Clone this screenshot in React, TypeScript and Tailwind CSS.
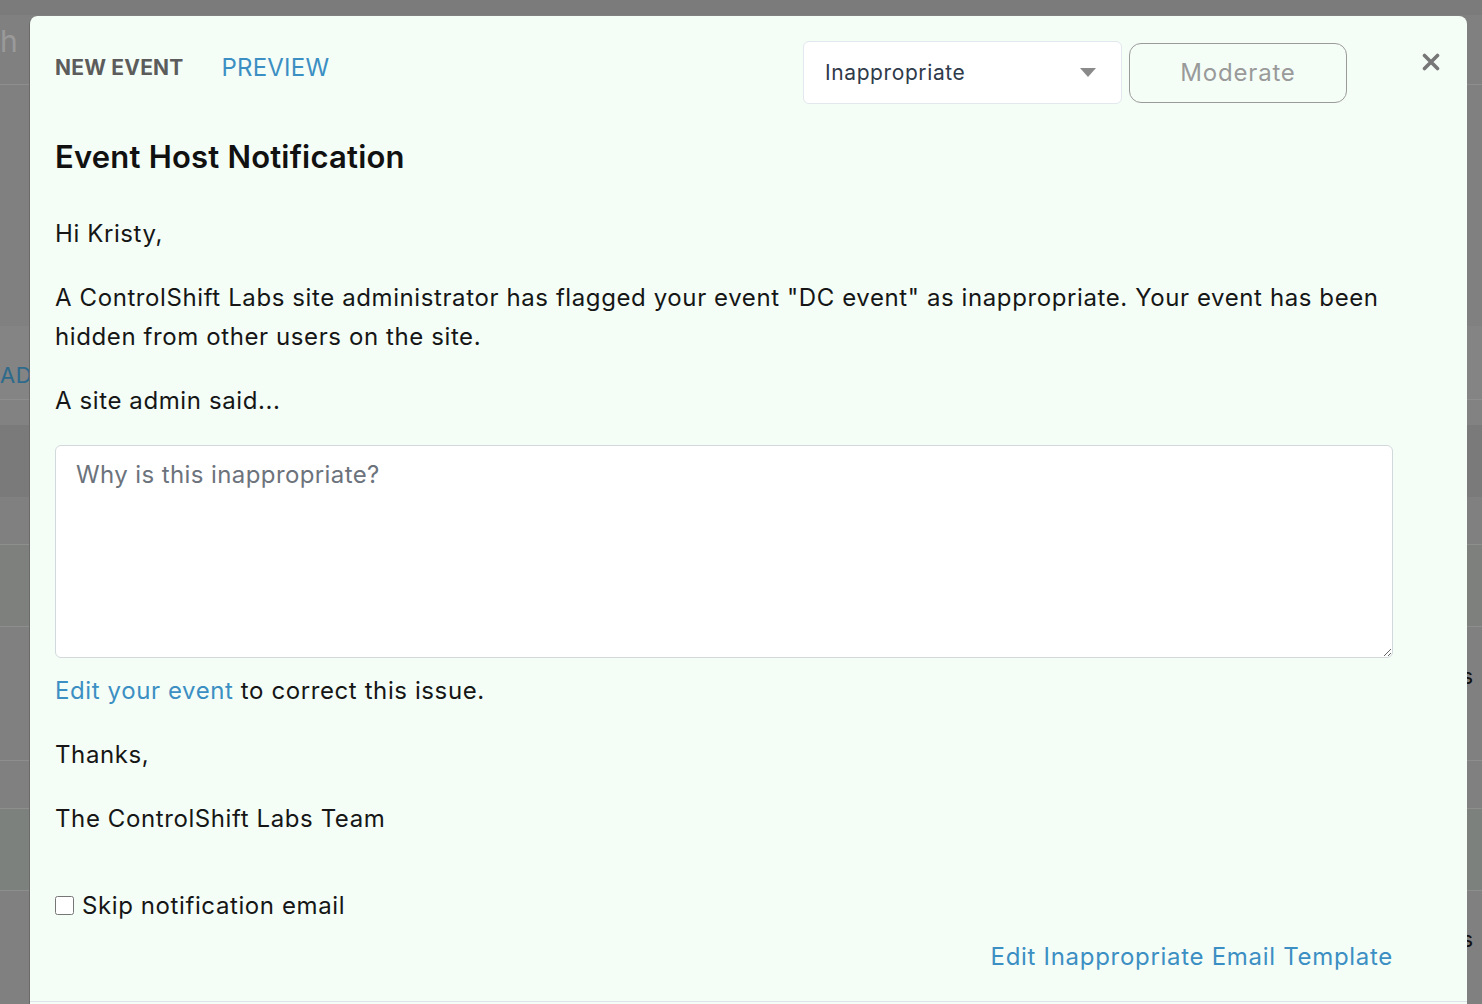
import React from 'react';

const BgRow: React.FC<{ h: string; bg: string; line?: boolean; left?: React.ReactNode; right?: React.ReactNode }> = ({ h, bg, line, left, right }) => (
  <div className={`flex items-center justify-between ${h} ${bg} ${line ? 'border-b border-[#8e8e8e]' : ''}`}>
    <div>{left}</div>
    <div>{right}</div>
  </div>
);

export default function App() {
  return (
    <div className="relative w-[1482px] h-[1004px] overflow-hidden bg-[#808080]" style={{ fontFamily: 'Inter, "Noto Sans", sans-serif' }}>
      {/* page behind the overlay */}
      <div className="flex flex-col">
        <BgRow h="h-[15px]" bg="bg-[#7b7b7b]" />
        <BgRow h="h-[70px]" bg="bg-[#808080]" line left={<span className="relative top-[-8px] text-[30px] text-[#9a9a9a] leading-none">h</span>} />
        <BgRow h="h-[241px]" bg="bg-[#808080]" />
        <BgRow h="h-[74px]" bg="bg-[#848484]" line left={<span className="relative top-[13px] text-[22px] tracking-wide text-[#2d6a8c]">AD</span>} />
        <BgRow h="h-[25px]" bg="bg-[#828282]" />
        <BgRow h="h-[72px]" bg="bg-[#7a7a7a]" />
        <BgRow h="h-[48px]" bg="bg-[#808080]" line />
        <BgRow h="h-[82px]" bg="bg-[#7e807d]" line />
        <BgRow h="h-[134px]" bg="bg-[#808080]" line right={<span className="relative top-[-17px] text-[22px] text-[#111] mr-[9px]">s</span>} />
        <BgRow h="h-[48px]" bg="bg-[#808080]" line />
        <BgRow h="h-[82px]" bg="bg-[#7d817d]" line />
        <BgRow h="h-[111px]" bg="bg-[#808080]" right={<span className="relative top-[-7px] text-[22px] text-[#111] mr-[9px]">s</span>} />
      </div>

      {/* modal */}
      <div className="absolute left-[29px] top-[16px] w-[1438px] h-[1010px] bg-[#f4fef7] rounded-t-[8px] border-l border-[#6a6a6a]">
        <div className="flex flex-col pl-[25px] pr-[74px]">
          {/* header */}
          <div className="flex items-start pt-[25px] -mr-[47px]">
            <div className="flex items-center gap-[38px] mt-[9px]">
              <span className="text-[21px] font-bold text-[#5c5c5c] tracking-[0.2px]">NEW EVENT</span>
              <span className="text-[24px] text-[#3c8fc3] tracking-[0.2px]">PREVIEW</span>
            </div>
            <div className="ml-auto flex items-start gap-[7px]">
              <div className="w-[319px] h-[63px] bg-white border border-[#e3e8ee] rounded-[6px] flex items-center justify-between pl-[21px] pr-[25px]">
                <span className="text-[21px] tracking-[0.6px] text-[#2f3a4a]">Inappropriate</span>
                <svg width="16" height="9" viewBox="0 0 16 9"><path d="M0 0h16L8 9z" fill="#8a8a8a" /></svg>
              </div>
              <button className="mt-[2px] w-[218px] h-[60px] border border-[#9b9b9b] rounded-[12px] text-[24px] tracking-[0.8px] text-[#9a9a9a] bg-transparent">Moderate</button>
            </div>
            <button className="ml-[75px] mt-[12px] text-[#777]">
              <svg width="18" height="18" viewBox="0 0 18 18"><path d="M2.5 2.5l13 13M15.5 2.5l-13 13" stroke="#777" strokeWidth="3.6" strokeLinecap="round" /></svg>
            </button>
          </div>

          <h2 className="mt-[33px] text-[31px] leading-[40px] font-semibold tracking-[0.2px] text-[#111]">Event Host Notification</h2>

          <div className="text-[24px] leading-[39px] tracking-[0.6px] text-[#161616]">
            <p className="mt-[37px]">Hi Kristy,</p>
            <p className="mt-[25px]">
              A ControlShift Labs site administrator has flagged your event "DC event" as inappropriate. Your event has been hidden from other users on the site.
            </p>
            <p className="mt-[25px]">A site admin said...</p>
            <textarea
              className="mt-[25px] block w-full h-[213px] bg-white border border-[#d3d8dc] rounded-[6px] px-[20px] py-[12px] text-[24px] leading-[34px] tracking-[0.4px] placeholder:text-[#6c737c] outline-none"
              placeholder="Why is this inappropriate?"
            />
            <p className="mt-[13px]">
              <span className="text-[#3c8fc3]">Edit your event</span> to correct this issue.
            </p>
            <p className="mt-[25px]">Thanks,</p>
            <p className="mt-[25px]">The ControlShift Labs Team</p>
            <label className="mt-[48px] flex items-center gap-[8px]">
              <input type="checkbox" className="w-[19px] h-[19px] m-0" />
              <span>Skip notification email</span>
            </label>
            <div className="mt-[12px] flex justify-end">
              <span className="text-[#3c8fc3] tracking-[0.7px]">Edit Inappropriate Email Template</span>
            </div>
          </div>
        </div>
        <div className="mt-[25px] border-t border-[#dde3e8]" />
      </div>
    </div>
  );
}
